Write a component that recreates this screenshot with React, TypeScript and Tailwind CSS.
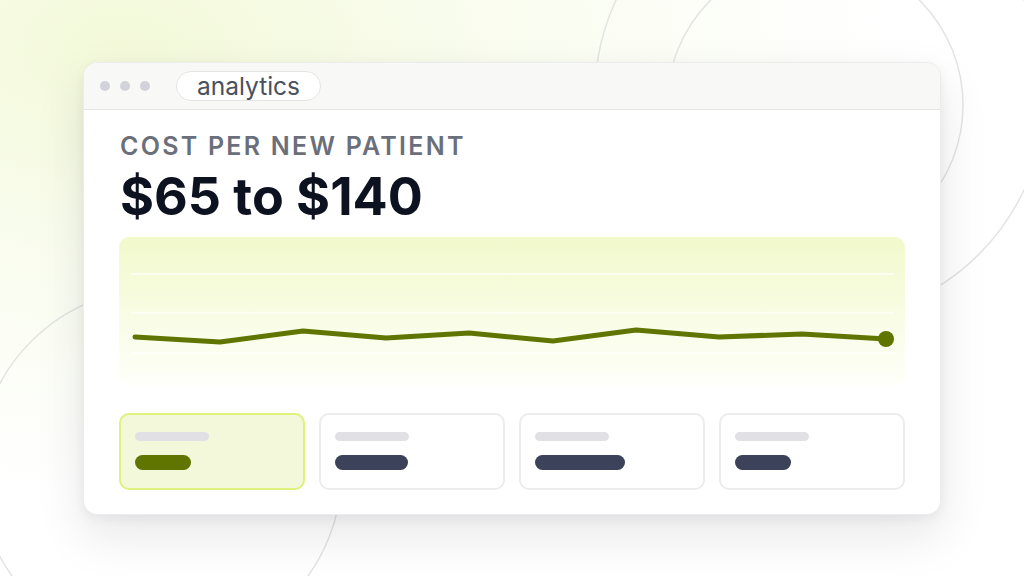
import React from 'react';

const points = [
  [16, 100], [101, 105], [184, 94], [267, 101], [350, 96],
  [434, 104], [517, 93], [600, 100], [683, 97], [767, 102],
];

const cards = [
  { active: true, bar: 'w-[56px] bg-[#5f7500]' },
  { active: false, bar: 'w-[73px] bg-[#3b4259]' },
  { active: false, bar: 'w-[90px] bg-[#3b4259]' },
  { active: false, bar: 'w-[56px] bg-[#3b4259]' },
];

export default function App() {
  const line = points.map((p) => p.join(',')).join(' ');

  return (
    <div
      className="relative w-[1024px] h-[576px] overflow-hidden bg-white"
      style={{ fontFamily: 'Inter, "Noto Sans", sans-serif' }}
    >
      {/* background glow + circles */}
      <div className="absolute inset-0 bg-[radial-gradient(ellipse_at_12%_8%,#f3f9d9_0%,#fafdf0_30%,rgba(255,255,255,0)_60%)]" />
      <svg className="absolute inset-0" width="1024" height="576" fill="none">
        <circle cx="820" cy="95" r="225" stroke="#e4e4e2" strokeWidth="1.5" />
        <circle cx="815" cy="105" r="148" stroke="#e4e4e2" strokeWidth="1.5" />
        <circle cx="160" cy="470" r="182" stroke="#e4e4e2" strokeWidth="1.5" />
      </svg>

      <div className="relative pt-[62px] pl-[83px]">
        {/* browser window */}
        <div className="w-[858px] rounded-[14px] bg-white border border-[#ececea] shadow-[0_20px_50px_rgba(20,20,40,0.10),0_4px_12px_rgba(20,20,40,0.05)] overflow-hidden">
          <div className="h-[47px] bg-[#f8f8f6] border-b border-[#e6e6e4] flex items-center pl-[16px] gap-[26px]">
            <div className="flex gap-[10px]">
              <div className="w-[10px] h-[10px] rounded-full bg-[#d2d2da]" />
              <div className="w-[10px] h-[10px] rounded-full bg-[#d2d2da]" />
              <div className="w-[10px] h-[10px] rounded-full bg-[#d2d2da]" />
            </div>
            <div className="h-[30px] px-[20px] rounded-full bg-white border border-[#e4e4e2] flex items-center text-[24.5px] text-[#4b5060] leading-none">
              analytics
            </div>
          </div>

          <div className="pl-[35px] pr-[35px] pt-[21px] pb-[24px]">
            <div className="pl-[1px] text-[25px] leading-[30px] font-semibold tracking-[0.09em] text-[#6b6f7b]">
              COST PER NEW PATIENT
            </div>
            <div className="pl-[1px] mt-[6px] text-[52px] leading-[60px] font-bold tracking-[0em] text-[#0d1220]">
              $65 to $140
            </div>

            <div className="mt-[10px] h-[148px] rounded-[10px] bg-gradient-to-b from-[#f2f9cc] to-[#fefff9] relative">
              <svg className="absolute inset-0" width="787" height="148" fill="none">
                <line x1="12" y1="37" x2="775" y2="37" stroke="#ffffff" strokeOpacity="0.8" strokeWidth="1.5" />
                <line x1="12" y1="76" x2="775" y2="76" stroke="#ffffff" strokeOpacity="0.8" strokeWidth="1.5" />
                <line x1="12" y1="116" x2="775" y2="116" stroke="#ffffff" strokeOpacity="0.8" strokeWidth="1.5" />
                <polyline
                  points={line}
                  stroke="#5f7500"
                  strokeWidth="5"
                  strokeLinecap="round"
                  strokeLinejoin="round"
                />
                <circle cx="767" cy="102" r="8" fill="#5f7500" />
              </svg>
            </div>

            <div className="mt-[28px] grid grid-cols-4 gap-[14px]">
              {cards.map((c, i) => (
                <div
                  key={i}
                  className={
                    c.active
                      ? 'h-[77px] rounded-[10px] border-2 border-[#dcf27c] bg-[#f2f8d9] pl-[14px] pt-[17px]'
                      : 'h-[77px] rounded-[10px] border-2 border-[#ececec] bg-white pl-[14px] pt-[17px]'
                  }
                >
                  <div className="w-[74px] h-[9px] rounded-full bg-[#e0e0e5]" />
                  <div className={`mt-[14px] h-[15px] rounded-full ${c.bar}`} />
                </div>
              ))}
            </div>
          </div>
        </div>
      </div>
    </div>
  );
}
